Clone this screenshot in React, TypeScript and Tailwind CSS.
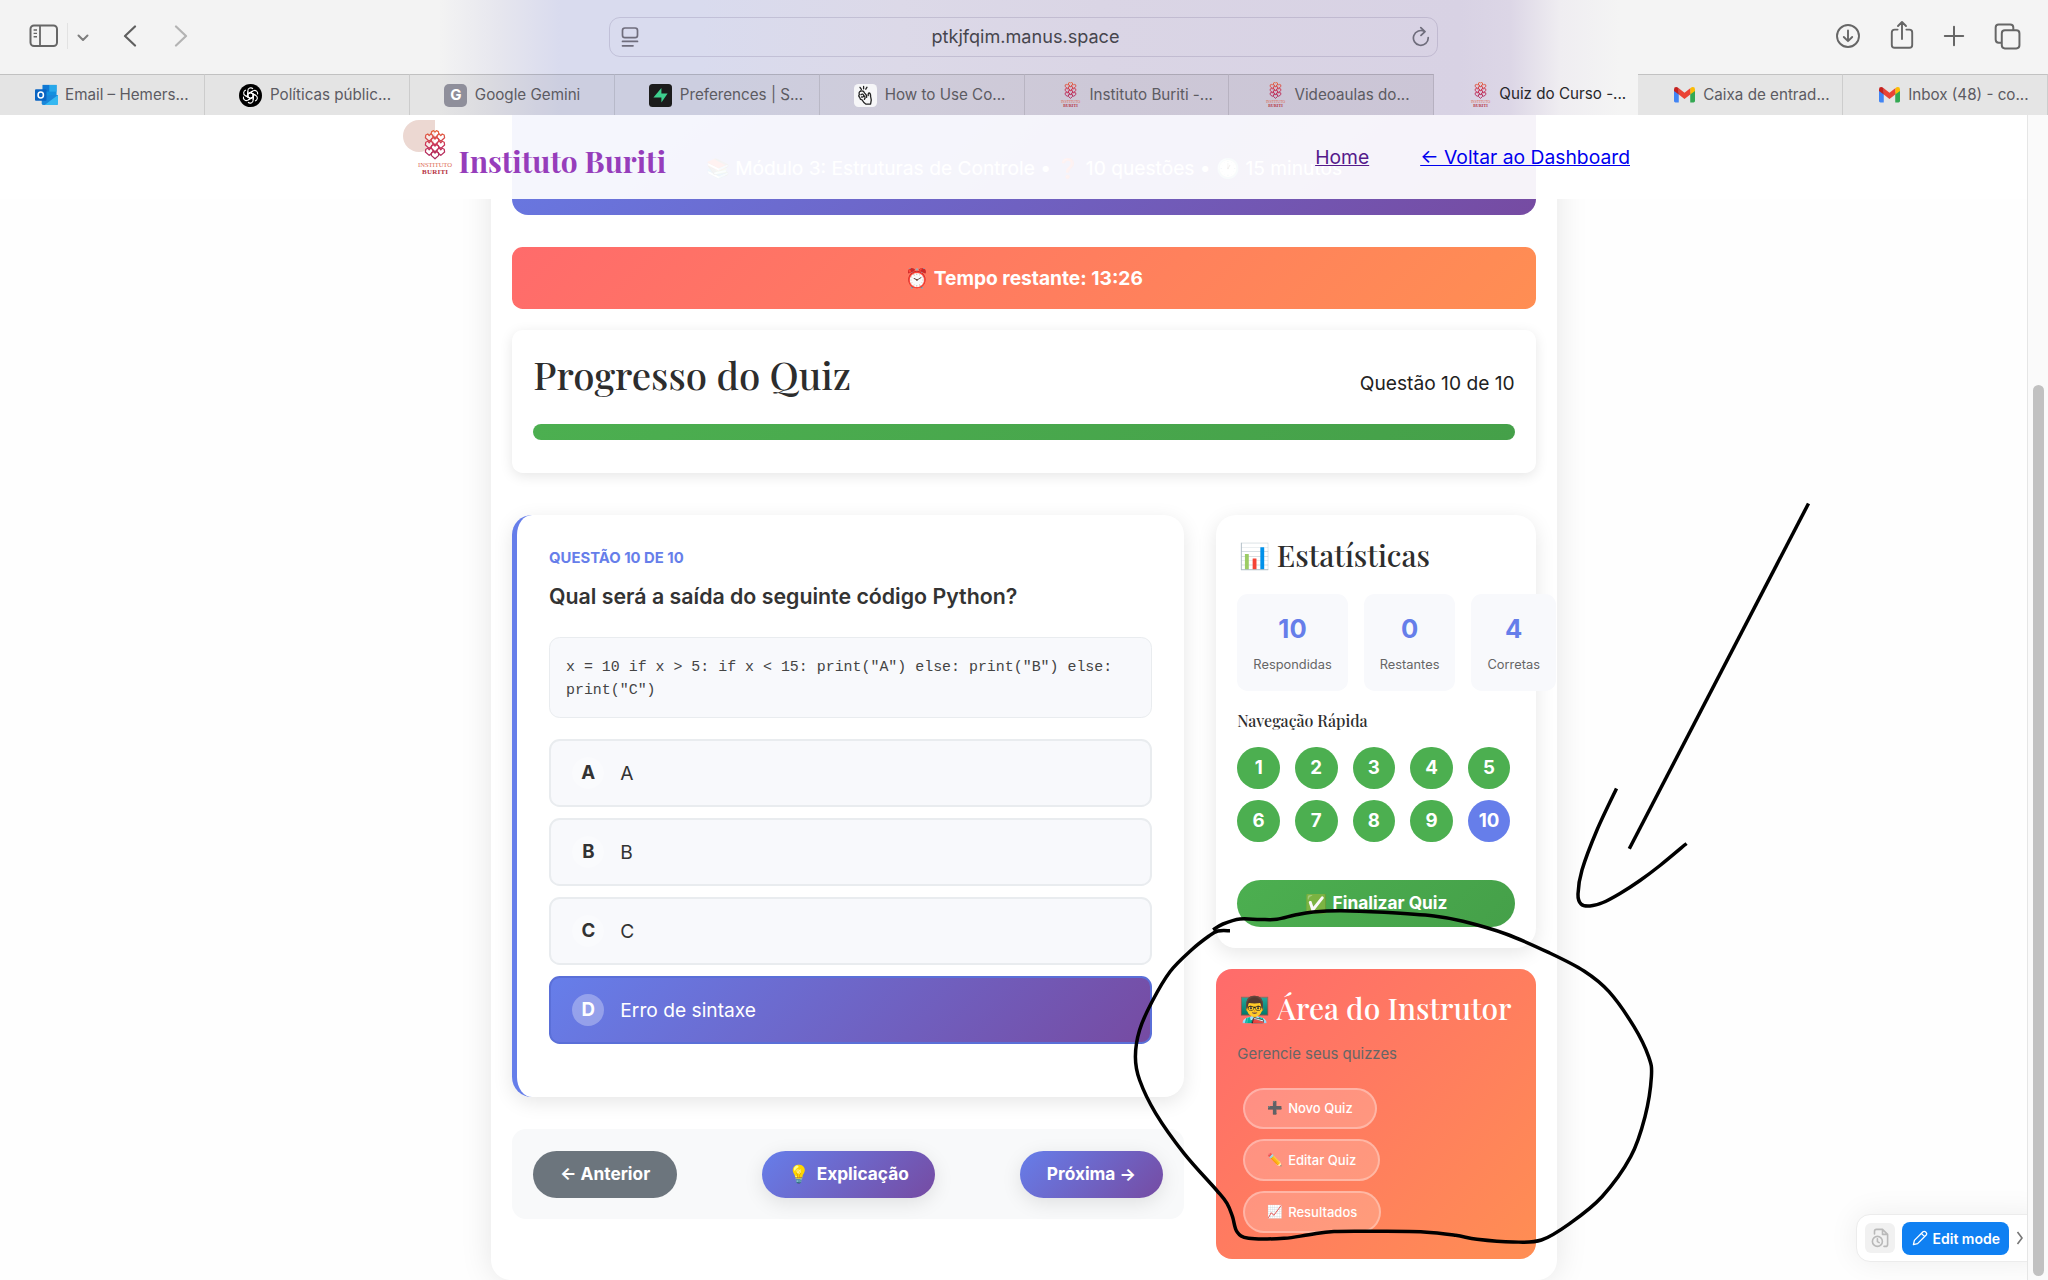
import type { ReactNode } from 'react'

type Point = [number, number]

/** Smooth freehand stroke through a list of points. */
function smooth(p: Point[]): string {
  let d = `M${p[0][0]} ${p[0][1]}`
  for (let i = 0; i < p.length - 1; i++) {
    const a = p[i - 1] ?? p[i]
    const b = p[i]
    const c = p[i + 1]
    const e = p[i + 2] ?? c
    d += ` C${b[0] + (c[0] - a[0]) / 6} ${b[1] + (c[1] - a[1]) / 6} ${c[0] - (e[0] - b[0]) / 6} ${c[1] - (e[1] - b[1]) / 6} ${c[0]} ${c[1]}`
  }
  return d
}

const LOOP: Point[] = [
  [1213, 929.7], [1223, 924], [1240, 919], [1260, 919.5], [1277, 919.3], [1295, 915], [1313, 912],
  [1341, 910.7], [1384, 912.3], [1434, 916], [1463, 921.3], [1506, 934], [1549, 952.7], [1584, 971], [1609, 991.7],
  [1634, 1026.7], [1648.6, 1056.7], [1651.4, 1076.7], [1645, 1116.7], [1630.7, 1156.7], [1602, 1196.7],
  [1570, 1223.3], [1541.4, 1240], [1513, 1242], [1477, 1239.3], [1455.7, 1235.3], [1423.6, 1231.9], [1377, 1231.3],
  [1334, 1231.5], [1309, 1234.7], [1284, 1238.3], [1248.6, 1238.3], [1237, 1231.7], [1232.5, 1216.7],
  [1227, 1203.3], [1216.4, 1190], [1184, 1153.3], [1155.7, 1113.3], [1139.6, 1080], [1135.4, 1056.7],
  [1139.6, 1030], [1152, 1001.7], [1170, 971.7], [1191.4, 950], [1209, 936], [1218, 931], [1230, 930.7],
]

const HOOK: Point[] = [
  [1616.5, 788.5], [1597, 830], [1582, 870], [1578, 894], [1581, 904], [1590, 906], [1603, 902.5],
  [1620, 893.5], [1640, 880.5], [1660, 865.5], [1686.5, 843.5],
]

function BuritiMark({ className, light }: { className?: string; light?: boolean }) {
  const hearts: Point[] = [
    [12, 4], [6.2, 7.4], [17.8, 7.4], [12, 11], [6.2, 14.6], [17.8, 14.6], [12, 18], [6.2, 21.6], [17.8, 21.6], [12, 25],
  ]
  return (
    <svg className={className} viewBox="-6 0 36 46">
      <defs>
        <linearGradient id="mark" x1="0" y1="0" x2="0" y2="30" gradientUnits="userSpaceOnUse">
          <stop offset="0" stopColor="#ea6a3c" />
          <stop offset="0.5" stopColor="#c93358" />
          <stop offset="1" stopColor="#a8285f" />
        </linearGradient>
      </defs>
      <g fill={light ? 'none' : '#ffffff80'} stroke="url(#mark)" strokeWidth={light ? 1.7 : 1.25} strokeLinejoin="round">
        {hearts.map(([x, y]) => (
          <path key={`${x}-${y}`} d={`M${x} ${y + 3.8} L${x - 3.8} ${y + 0.4} L${x - 3.4} ${y - 2.4} L${x - 1.4} ${y - 3.4} L${x} ${y - 1.8} L${x + 1.4} ${y - 3.4} L${x + 3.4} ${y - 2.4} L${x + 3.8} ${y + 0.4} Z`} />
        ))}
      </g>
      <text x="12" y="36.5" textAnchor="middle" textLength="34" fontSize="6.6" fill="#dd6a52" fontFamily="Liberation Serif, serif">INSTITUTO</text>
      <text x="12" y="43.8" textAnchor="middle" textLength="26" fontSize="7" fontWeight="700" fill="#b5303f" fontFamily="Liberation Serif, serif">BURITI</text>
    </svg>
  )
}

function OutlookIcon() {
  return (
    <svg viewBox="0 0 24 22" className="h-[22px] w-6">
      <rect x="8" y="0.5" width="14.5" height="14" fill="#1490df" />
      <rect x="8" y="0.5" width="7" height="7" fill="#0f78d4" />
      <rect x="15" y="0.5" width="7.5" height="7" fill="#28a8ea" />
      <path d="M7 11.5 L24 11 V19.5 Q24 21.5 22 21.5 H9 Q7 21.5 7 19.5 Z" fill="#1a86d9" />
      <path d="M24 11 L10 21.5 H22 Q24 21.5 24 19.5 Z" fill="#35b8f1" />
      <rect x="0" y="5" width="12" height="12" rx="1" fill="#0a64c2" />
      <ellipse cx="6" cy="11" rx="2.8" ry="3.1" fill="none" stroke="#fff" strokeWidth="1.6" />
    </svg>
  )
}

function OpenAiIcon() {
  return (
    <svg viewBox="0 0 24 24" className="size-[23px]">
      <circle cx="12" cy="12" r="12" fill="#000" />
      <g fill="none" stroke="#fff" strokeWidth="1.15" strokeLinejoin="round">
        {[0, 60, 120, 180, 240, 300].map((a) => (
          <path key={a} transform={`rotate(${a} 12 12)`} d="M9.2 13.6 V7.2 A3.1 3.1 0 0 1 14.6 5.1 M9.2 10.4 L12 8.8 L17.2 11.8" />
        ))}
      </g>
    </svg>
  )
}

function GeminiIcon() {
  return <span className="flex size-[23px] items-center justify-center rounded-[5px] bg-[#8f8f9b] text-[15px] font-bold text-white">G</span>
}

function SupabaseIcon() {
  return (
    <svg viewBox="0 0 23 23" className="size-[23px]">
      <rect width="23" height="23" rx="3.5" fill="#1c1c1c" />
      <path d="M12.4 4 V9.6 H18.6 L12.4 18.6 V13.6 H4.4 Z" fill="#3ecf8e" />
    </svg>
  )
}

function HandIcon() {
  return (
    <svg viewBox="0 0 23 23" className="size-[23px]">
      <rect width="23" height="23" rx="4.5" fill="#f6f6f8" />
      <g fill="none" stroke="#222" strokeWidth="1.3" strokeLinecap="round" strokeLinejoin="round">
        <path d="M6 3.4 L7.4 5.4 M9.6 2.4 V4.8 M13 3.2 L11.8 5.2" />
        <path d="M6.6 7.2 Q4.4 8 5.4 10.4 Q4 11.8 5.8 13.6 Q6 15.6 8 15.8 Q9.4 18.6 12 20.2 L16.6 20 Q18 16 16.6 12.6 Q16.8 9.4 15.2 8.8 Q14 9 14.2 11.6" />
        <path d="M6.6 7.2 Q9.4 6.2 10.6 9 Q12.8 10.6 12.6 13.4 M7 10.6 Q9 9.2 9.8 11.6 Q9.4 13.4 7.6 13 M9.8 11.6 Q12 13.6 10.4 15.2" />
      </g>
    </svg>
  )
}

function GmailIcon() {
  return (
    <svg viewBox="0 0 22 16" className="h-[15.5px] w-[21px]">
      <path d="M0 2.5 V14.5 Q0 16 1.5 16 H5 V6 Z" fill="#4285f4" />
      <path d="M22 2.5 V14.5 Q22 16 20.5 16 H17 V6 Z" fill="#34a853" />
      <path d="M17 1.2 V7.8 L22 4 V2.4 Q22 0 19.8 0 Q18.6 0 17 1.2 Z" fill="#fbbc04" />
      <path d="M5 7.8 V1.2 L11 5.8 L17 1.2 V7.8 L11 12.4 Z" fill="#ea4335" />
      <path d="M0 2.4 V4 L5 7.8 V1.2 Q3.4 0 2.2 0 Q0 0 0 2.4 Z" fill="#c5221f" />
    </svg>
  )
}

const TABS: { icon: ReactNode; label: string; active?: boolean }[] = [
  { icon: <OutlookIcon />, label: 'Email – Hemers...' },
  { icon: <OpenAiIcon />, label: 'Políticas públic...' },
  { icon: <GeminiIcon />, label: 'Google Gemini' },
  { icon: <SupabaseIcon />, label: 'Preferences | S...' },
  { icon: <HandIcon />, label: 'How to Use Co...' },
  { icon: <BuritiMark light className="h-[26px] w-[23px]" />, label: 'Instituto Buriti -...' },
  { icon: <BuritiMark light className="h-[26px] w-[23px]" />, label: 'Videoaulas do...' },
  { icon: <BuritiMark light className="h-[26px] w-[23px]" />, label: 'Quiz do Curso -...', active: true },
  { icon: <GmailIcon />, label: 'Caixa de entrad...' },
  { icon: <GmailIcon />, label: 'Inbox (48) - co...' },
]

function Toolbar() {
  return (
    <div className="flex h-[74px] items-center pl-[29px] pr-[27px] pb-[2px] text-[#666]">
      <svg viewBox="0 0 30 24" className="h-6 w-[30px]" fill="none" stroke="currentColor" strokeWidth="2">
        <rect x="1.5" y="1.5" width="26.5" height="20.5" rx="3.5" />
        <path d="M11 1.5 V22" strokeWidth="1.8" />
        <path d="M4.6 6 H8 M4.6 9.4 H8 M4.6 12.8 H8" strokeWidth="1.4" />
      </svg>
      <div className="ml-[8px] h-[26px] w-px bg-[#e2e2e2]" />
      <svg viewBox="0 0 12 8" className="ml-[9px] mt-1 h-2 w-3" fill="none" stroke="#7d7d7d" strokeWidth="2" strokeLinecap="round" strokeLinejoin="round">
        <path d="M1.5 1.5 L6 6 L10.5 1.5" />
      </svg>
      <svg viewBox="0 0 14 22" className="ml-[34px] h-[22px] w-3.5" fill="none" stroke="#5f5f5f" strokeWidth="2.2" strokeLinecap="round" strokeLinejoin="round">
        <path d="M12 1.5 L2 11 L12 20.5" />
      </svg>
      <svg viewBox="0 0 14 22" className="ml-[37px] h-[22px] w-3.5" fill="none" stroke="#b3b3b3" strokeWidth="2.2" strokeLinecap="round" strokeLinejoin="round">
        <path d="M2 1.5 L12 11 L2 20.5" />
      </svg>
      <div className="ml-[421px] mt-[1px] flex h-10 w-[829px] items-center justify-between rounded-[11px] border-[1.5px] border-[#5a507830] px-[11px]">
        <svg viewBox="0 0 18 20" className="h-5 w-[18px]" fill="none" stroke="#6f6d7c" strokeWidth="1.7" strokeLinecap="round">
          <rect x="1.5" y="1" width="15" height="9.6" rx="2.4" />
          <path d="M1.5 14.4 H16.5 M1.5 18.8 H12" />
        </svg>
        <span className="pt-[1px] text-[18.1px] text-[#46454d]">ptkjfqim.manus.space</span>
        <svg viewBox="0 0 18 22" className="mr-[-4px] h-[22px] w-[18px]" fill="none" stroke="#6f6d7c" strokeWidth="1.7" strokeLinecap="round" strokeLinejoin="round">
          <path d="M12.6 5.6 A7.4 7.4 0 1 0 16.2 11.6 M8.8 1.6 L13 5.6 L9 9.4" />
        </svg>
      </div>
      <div className="ml-auto flex items-center gap-[29px]">
        <svg viewBox="0 0 26 26" className="size-[26px]" fill="none" stroke="currentColor" strokeWidth="1.9" strokeLinecap="round" strokeLinejoin="round">
          <circle cx="13" cy="13" r="11" />
          <path d="M13 7.4 V18 M8.8 14 L13 18.2 L17.2 14" />
        </svg>
        <svg viewBox="0 0 24 30" className="-mt-[3px] h-[30px] w-6" fill="none" stroke="currentColor" strokeWidth="1.9" strokeLinecap="round" strokeLinejoin="round">
          <path d="M7.6 9.6 H4.6 Q1.8 9.6 1.8 12.4 V25 Q1.8 27.8 4.6 27.8 H19.4 Q22.2 27.8 22.2 25 V12.4 Q22.2 9.6 19.4 9.6 H16.4 M12 19 V2.2 M8 6 L12 2 L16 6" />
        </svg>
        <svg viewBox="0 0 22 22" className="size-[22px]" fill="none" stroke="currentColor" strokeWidth="2" strokeLinecap="round">
          <path d="M11 1.8 V20.2 M1.8 11 H20.2" />
        </svg>
        <svg viewBox="0 0 26 26" className="size-[27px]" fill="none" stroke="currentColor" strokeWidth="1.9" strokeLinejoin="round">
          <rect x="7.5" y="7" width="17" height="17.5" rx="3" />
          <path d="M7.5 19 H4.5 Q1.6 19 1.6 16 V4.4 Q1.6 1.5 4.5 1.5 H15.6 Q18.6 1.5 18.6 4.4 V7" />
        </svg>
      </div>
    </div>
  )
}

function Browser() {
  return (
    <header className="bg-[linear-gradient(90deg,#f3f3f3_0px,#f3f3f3_440px,#e6e6ee_500px,#d9dbee_560px,#d9dbee_700px,#dcd9e8_900px,#dad5e5_1100px,#d8d2e4_1460px,#dcd6e6_1510px,#efedf1_1560px,#f4f4f4_1620px)]">
      <Toolbar />
      <nav className="flex h-[41px]">
        {TABS.map((t) => (
          <div
            key={t.label}
            className={
              t.active
                ? 'flex min-w-0 flex-1 items-center gap-[7.5px] pl-[34.5px] text-[#28272b]'
                : 'flex min-w-0 flex-1 items-center gap-[7.5px] border-r border-t-[1.5px] border-r-black/10 border-t-black/15 bg-black/[0.058] pl-[34.5px] text-[#5c5b62]'
            }
          >
            <span className="flex w-[23px] shrink-0 justify-center">{t.icon}</span>
            <span className="whitespace-nowrap text-[15.2px]">{t.label}</span>
          </div>
        ))}
      </nav>
    </header>
  )
}

function SiteNav() {
  return (
    <div className="absolute inset-x-0 top-0 z-10 h-[84px] bg-white/[0.935]">
      <div className="mx-auto flex w-[1242px] justify-between">
        <div className="flex">
          <div className="relative h-[70px] w-[55.5px]">
            <div className="absolute top-[5px] left-0 size-8 rounded-[50%_0_50%_50%] bg-[#ecd8d2]" />
            <BuritiMark className="absolute top-[15px] left-[14px] h-[46px] w-9" />
          </div>
          <span className="pt-[28px] font-['Playfair_Display','Liberation_Serif',serif] text-[29.87px] leading-9 font-bold text-[#963dbb]">Instituto Buriti</span>
        </div>
        <div className="flex gap-[51px] pt-[28px] pr-[15px] text-[19.3px] leading-[29px]">
          <a className="text-[#551a8b] underline">Home</a>
          <a className="text-[#0000ee] underline">← Voltar ao Dashboard</a>
        </div>
      </div>
    </div>
  )
}

function Option({ letter, text, selected }: { letter: string; text: string; selected?: boolean }) {
  return (
    <div
      className={
        selected
          ? 'flex h-[68px] items-center gap-4 rounded-[10.67px] border-[2.67px] border-[#5a6fd8] bg-[linear-gradient(135deg,#667eea,#764ba2)] px-[21.33px] text-white'
          : 'flex h-[68px] items-center gap-4 rounded-[10.67px] border-[2.67px] border-[#e9ecef] bg-[#f8f9fc] px-[21.33px] text-[#333]'
      }
    >
      <span className="flex size-8 items-center justify-center rounded-full bg-white/30 text-[18.67px] font-bold">{letter}</span>
      <span className="text-[19.2px]">{text}</span>
    </div>
  )
}

function Stat({ value, label }: { value: string; label: string }) {
  return (
    <div className="h-[96.5px] shrink-0 rounded-[10.67px] bg-[#f8f9fc] px-4 pt-[17px] text-center">
      <div className="text-[25.6px] leading-9 font-bold text-[#667eea]">{value}</div>
      <div className="mt-[8px] text-[12.85px] leading-5 text-[#666]">{label}</div>
    </div>
  )
}

function PillButton({ children }: { children: ReactNode }) {
  return <button className="flex h-[47px] items-center rounded-full bg-[linear-gradient(135deg,#667eea,#764ba2)] px-[26.67px] text-[17.3px] font-bold text-white shadow-[0_5px_20px_rgba(0,0,0,0.1)]">{children}</button>
}

function InstructorButton({ emoji, children }: { emoji: string; children: ReactNode }) {
  return (
    <button className="flex h-[41.3px] items-center gap-[6px] rounded-full border-[2px] border-white/30 bg-white/20 px-[21.8px] pt-px text-[13.05px] font-medium text-white">
      <span className="flex w-[15px] justify-center text-[12.5px]">{emoji}</span>
      {children}
    </button>
  )
}

function CardTitle({ emoji, children, light }: { emoji: string; children: ReactNode; light?: boolean }) {
  return (
    <h3
      className={
        light
          ? "flex items-center font-['Playfair_Display','Liberation_Serif',serif] text-[29.87px] leading-[38px] font-medium whitespace-nowrap text-white"
          : "flex items-center font-['Playfair_Display','Liberation_Serif',serif] text-[29.87px] leading-[38px] font-medium whitespace-nowrap text-[#2d2d2d]"
      }
    >
      <span className="flex w-[39.5px] shrink-0 pl-[1.5px] text-[25px]">{emoji}</span>
      <span>{children}</span>
    </h3>
  )
}

function QuizPanel() {
  return (
    <div className="w-[672px]">
      <section className="h-[582px] rounded-[20px] border-l-[5.33px] border-[#667eea] bg-white pl-8 pr-8 pt-8 shadow-[0_5px_20px_rgba(0,0,0,0.1)]">
        <div className="text-[14.85px] leading-[22px] font-bold text-[#667eea]">QUESTÃO 10 DE 10</div>
        <div className="mt-[11px] text-[21.33px] leading-8 font-semibold text-[#333]">Qual será a saída do seguinte código Python?</div>
        <pre className="mt-[25px] h-[80.5px] whitespace-pre-wrap rounded-[10.67px] border-[1.33px] border-[#e9ecef] bg-[#f8f9fc] px-4 pt-[18px] font-['Liberation_Mono',monospace] text-[14.93px] leading-[23px] text-[#444]">
          {'x = 10 if x > 5: if x < 15: print("A") else: print("B") else:\nprint("C")'}
        </pre>
        <div className="mt-[21.5px] flex flex-col gap-[11px]">
          <Option letter="A" text="A" />
          <Option letter="B" text="B" />
          <Option letter="C" text="C" />
          <Option letter="D" text="Erro de sintaxe" selected />
        </div>
      </section>
      <div className="mt-8 flex h-[90px] items-center justify-between rounded-[14px] bg-[#f8f9fa] px-[21.33px]">
        <button className="flex h-[47px] items-center rounded-full bg-[#6c757d] px-[26.67px] text-[17.3px] font-bold text-white">← Anterior</button>
        <PillButton>
          <span className="w-[28.5px] text-left">💡</span>Explicação
        </PillButton>
        <PillButton>Próxima →</PillButton>
      </div>
    </div>
  )
}

function Sidebar() {
  return (
    <aside className="w-80">
      <section className="h-[433px] rounded-[20px] bg-white px-[21.33px] pt-[21px] shadow-[0_5px_20px_rgba(0,0,0,0.1)]">
        <CardTitle emoji="📊">Estatísticas</CardTitle>
        <div className="mt-[20px] flex gap-4">
          <Stat value="10" label="Respondidas" />
          <Stat value="0" label="Restantes" />
          <Stat value="4" label="Corretas" />
        </div>
        <h4 className="mt-[18.5px] font-['Playfair_Display','Liberation_Serif',serif] text-[16px] leading-[24px] font-medium text-[#2d2d2d]">Navegação Rápida</h4>
        <div className="mt-[13.5px] grid grid-cols-5 gap-[10.67px]">
          {['1', '2', '3', '4', '5', '6', '7', '8', '9', '10'].map((n) => (
            <span key={n} className={n === '10' ? 'flex size-[42.67px] items-center justify-center rounded-full bg-[#667eea] text-[18.67px] font-bold text-white' : 'flex size-[42.67px] items-center justify-center rounded-full bg-[#4caf50] text-[18.67px] font-bold text-white'}>{n}</span>
          ))}
        </div>
        <button className="mt-[37.5px] flex h-[46.7px] w-full items-center justify-center rounded-full bg-[linear-gradient(135deg,#4caf50,#45a049)] text-[17.3px] font-bold text-white">
          <span className="w-[28px] text-left text-[18px]">✅</span>Finalizar Quiz
        </button>
      </section>
      <section className="mt-[21px] h-[290px] rounded-[16px] bg-[linear-gradient(135deg,#ff6b6b,#ff8e53)] px-[21.33px] pt-[20px]">
        <CardTitle emoji="👨‍🏫" light>Área do Instrutor</CardTitle>
        <p className="mt-[15px] text-[14.93px] leading-6 text-[#666]">Gerencie seus quizzes</p>
        <div className="mt-[21.5px] flex flex-col items-start gap-[10.6px] pl-[6px]">
          <InstructorButton emoji="➕">Novo Quiz</InstructorButton>
          <InstructorButton emoji="✏️">Editar Quiz</InstructorButton>
          <InstructorButton emoji="📈">Resultados</InstructorButton>
        </div>
      </section>
    </aside>
  )
}

function EditWidget() {
  return (
    <div className="absolute top-[1099px] right-0 z-10 flex h-[48px] w-[192px] items-center rounded-[14px] border border-[#ececec] bg-white pl-[8px] shadow-[0_0_30px_rgba(0,0,0,0.07)]">
      <span className="flex size-[30px] items-center justify-center rounded-[6px] bg-[#f1f1f1]">
        <svg viewBox="0 0 18 20" className="h-5 w-[18px]" fill="none" stroke="#b9b9b9" strokeWidth="1.6" strokeLinecap="round" strokeLinejoin="round">
          <path d="M3.5 6 V3.4 Q3.5 1.4 5.5 1.4 H11.5 L16.6 6.4 V16.4 Q16.6 18.4 14.6 18.4 H13 M11.5 1.4 V6.4 H16.6" />
          <circle cx="6.4" cy="13.4" r="5" />
          <path d="M6.4 10.8 V13.6 L8.2 14.6" />
        </svg>
      </span>
      <span className="ml-[6.5px] flex h-[33px] w-[107px] items-center rounded-[8px] bg-[#0f80f2] pl-[10px] text-[14px] font-semibold text-white">
        <svg viewBox="0 0 16 16" className="mr-[5px] size-4" fill="none" stroke="#fff" strokeWidth="1.3" strokeLinejoin="round">
          <path d="M1.4 14.6 L2.4 10.4 L11 1.8 Q12.2 0.8 13.4 1.8 L14.2 2.6 Q15.2 3.8 14.2 5 L5.6 13.6 Z M9.4 3.4 L12.6 6.6" />
        </svg>
        <span className="whitespace-nowrap">Edit mode</span>
      </span>
      <svg viewBox="0 0 8 14" className="ml-[7px] h-3.5 w-2" fill="none" stroke="#777" strokeWidth="1.6">
        <path d="M1.5 1 L6 7 L1.5 13" />
      </svg>
    </div>
  )
}

export default function App() {
  return (
    <div className="relative flex h-[1280px] w-[2048px] flex-col overflow-hidden bg-white font-['Inter','Liberation_Sans',sans-serif]">
      <Browser />
      <div className="relative h-[1165px] overflow-hidden bg-[#fefefe]">
        <SiteNav />
        <main className="mx-auto -mt-[100px] h-[1265px] w-[1066.67px] rounded-[20px] bg-white px-[21.33px] shadow-[0_0_32px_rgba(0,0,0,0.1)]">
          <div className="flex h-[200px] items-end justify-center rounded-[16px] bg-[linear-gradient(135deg,#667eea,#764ba2)] pb-[33px] text-[19.2px] leading-7 text-white">
            <span className="whitespace-pre">📚 Módulo 3: Estruturas de Controle • ❓ 10 questões • 🕐 15 minutos</span>
          </div>
          <div className="mt-[32px] flex h-[62px] items-center justify-center rounded-[10.67px] bg-[linear-gradient(135deg,#ff6b6b,#ff8e53)] text-[19.2px] font-bold text-white">
            <span>⏰ Tempo restante: 13:26</span>
          </div>
          <section className="mt-[21px] h-[143px] rounded-[10.67px] bg-white px-[21.33px] pt-[21px] shadow-[0_3px_13px_rgba(0,0,0,0.1)]">
            <div className="flex h-[44px] items-start justify-between">
              <h2 className="pt-px font-['Playfair_Display','Liberation_Serif',serif] text-[38.4px] leading-[44px] font-medium text-[#2d2d2d]">Progresso do Quiz</h2>
              <span className="pt-[18px] text-[19.2px] leading-[28px] text-[#222]">Questão 10 de 10</span>
            </div>
            <div className="mt-[29px] h-4 rounded-full bg-[linear-gradient(135deg,#4caf50,#45a049)]" />
          </section>
          <div className="mt-[42px] flex gap-8">
            <QuizPanel />
            <Sidebar />
          </div>
        </main>
        <EditWidget />
        <div className="absolute inset-y-0 right-0 z-20 w-[21px] border-l border-[#e6e6e6] bg-[#fafafa]">
          <div className="mt-[270px] ml-[4.5px] h-[891px] w-[11.5px] rounded-full bg-[#c1c1c1]" />
        </div>
      </div>
      <svg className="pointer-events-none absolute inset-0 z-30 h-[1280px] w-[2048px]" viewBox="0 0 2048 1280" fill="none" stroke="#000" strokeWidth="3.5" strokeLinejoin="round">
        <path d="M1808.5 503.5 L1629.3 848.7" />
        <path d={smooth(HOOK)} />
        <path d={smooth(LOOP)} />
      </svg>
    </div>
  )
}
